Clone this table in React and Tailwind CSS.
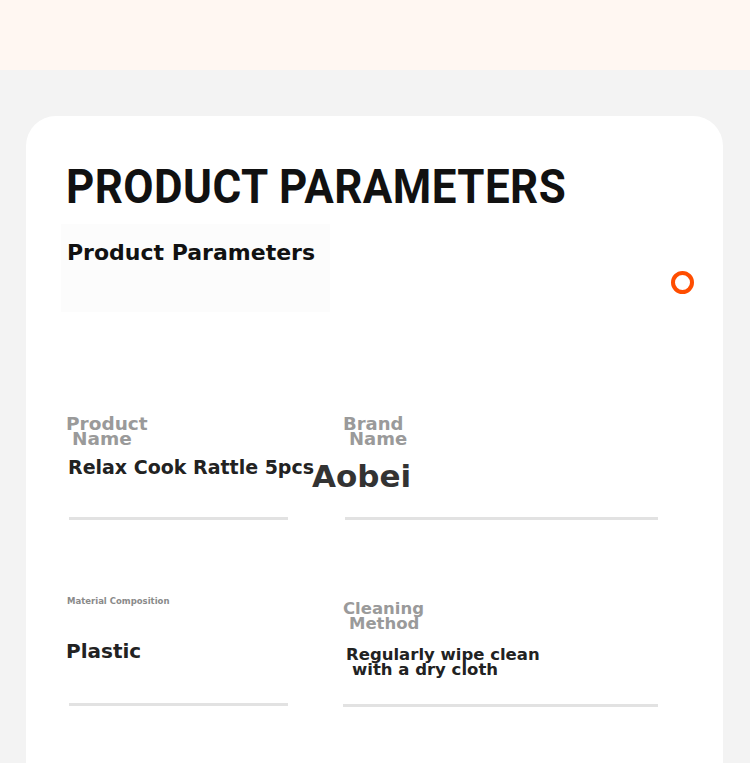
import React from "react";

const Label = ({ lines, className = "" }) => (
  <div className={`font-bold text-[#9a9a9a] leading-[15px] ${className}`}>
    {lines.map((l, i) => (
      <div key={i} className={i > 0 ? "pl-[6px]" : ""}>{l}</div>
    ))}
  </div>
);

const App = () => {
  return (
    <div className="w-[750px] h-[763px] overflow-hidden bg-[#f3f3f3] font-['DejaVu_Sans',Arial,sans-serif]">
      <div className="h-[70px] bg-[#fff7f2]" />
      <div className="px-[26px] pt-[46px]">
        <div className="w-[697px] h-[700px] bg-white rounded-[30px] pl-[40px] pr-[28px] pt-[46px]">
          <h1 className="font-['Roboto',sans-serif] font-bold text-[48px] leading-[50px] tracking-[0.5px] text-[#111] scale-x-[0.915] origin-left whitespace-nowrap">
            PRODUCT PARAMETERS
          </h1>

          <div className="flex items-start justify-between mt-[12px]">
            <div className="w-[269px] h-[88px] bg-[#fcfcfc] -ml-[5px] pl-[6px] pt-[16px]">
              <div className="font-bold text-[22px] leading-[26px] text-[#111] whitespace-nowrap">Product Parameters</div>
            </div>
            <div className="mt-[47px] mr-[1px] w-[23px] h-[23px] rounded-full border-[4px] border-[#ff4d00]" />
          </div>

          <div className="grid grid-cols-[277px_1fr] mt-[104px] pr-[37px]">
            <div>
              <Label lines={["Product", "Name"]} className="text-[18.5px]" />
              <div className="font-bold text-[19px] leading-[22px] text-[#222] mt-[10px] ml-[2px] whitespace-nowrap">
                Relax Cook Rattle 5pcs
              </div>
              <div className="h-[3px] w-[219px] bg-[#e2e2e2] mt-[39px] ml-[3px]" />
            </div>
            <div>
              <Label lines={["Brand", "Name"]} className="text-[18px]" />
              <div className="font-bold text-[31px] leading-[36px] text-[#333] mt-[12px] -ml-[31px]">Aobei</div>
              <div className="h-[3px] bg-[#e2e2e2] mt-[23px] ml-[2px]" />
            </div>
          </div>

          <div className="grid grid-cols-[277px_1fr] mt-[75px] pr-[37px]">
            <div>
              <div className="font-bold text-[8.5px] leading-[12px] text-[#8a8a8a] ml-[1px] whitespace-nowrap">Material Composition</div>
              <div className="font-bold text-[20px] leading-[24px] text-[#222] mt-[32px]">Plastic</div>
              <div className="h-[3px] w-[219px] bg-[#e2e2e2] mt-[40px] ml-[3px]" />
            </div>
            <div>
              <Label lines={["Cleaning", "Method"]} className="text-[16.5px] mt-[6px]" />
              <div className="font-bold text-[16.5px] leading-[15px] text-[#222] mt-[16px] ml-[3px] whitespace-nowrap">
                <div>Regularly wipe clean</div>
                <div className="pl-[6px]">with a dry cloth</div>
              </div>
              <div className="h-[3px] bg-[#e2e2e2] mt-[27px]" />
            </div>
          </div>
        </div>
      </div>
    </div>
  );
};

export default App;
